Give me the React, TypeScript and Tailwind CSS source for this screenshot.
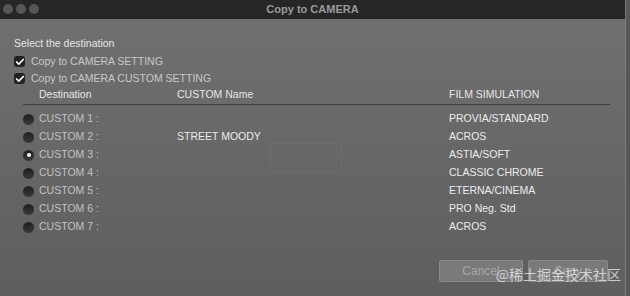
import { Check } from "lucide-react";

const rows = [
  { id: 1, name: "", film: "PROVIA/STANDARD" },
  { id: 2, name: "STREET MOODY", film: "ACROS" },
  { id: 3, name: "", film: "ASTIA/SOFT" },
  { id: 4, name: "", film: "CLASSIC CHROME" },
  { id: 5, name: "", film: "ETERNA/CINEMA" },
  { id: 6, name: "", film: "PRO Neg. Std" },
  { id: 7, name: "", film: "ACROS" },
];

function Checkbox() {
  return (
    <span className="flex h-[11px] w-[11px] items-center justify-center rounded-[3px] bg-[#222]">
      <Check size={10} strokeWidth={4} className="text-white" />
    </span>
  );
}

function Radio({ on }: { on?: boolean }) {
  return (
    <span className="flex h-[11px] w-[11px] items-center justify-center rounded-full bg-gradient-to-b from-[#1f1f1f] to-[#3a3a3a]">
      {on && <span className="h-[4px] w-[4px] rounded-full bg-white" />}
    </span>
  );
}

export default function App() {
  return (
    <div
      className="flex h-[296px] w-[630px] bg-[#585858] text-[10.5px]"
      style={{ fontFamily: '"Liberation Sans", Arial, sans-serif' }}
    >
      <div className="flex w-[626px] flex-col border-r border-[#7c7c7c]">
        {/* title bar */}
        <div className="relative flex h-[19px] items-center bg-[#262626] px-[3px] pb-[1px]">
          <div className="flex gap-[3px]">
            <span className="h-[10px] w-[10px] rounded-full bg-[#565656]" />
            <span className="h-[10px] w-[10px] rounded-full bg-[#565656]" />
            <span className="h-[10px] w-[10px] rounded-full bg-[#565656]" />
          </div>
          <div className="absolute inset-0 flex items-center justify-center text-[11px] font-bold text-[#9a9a9a]">
            Copy to CAMERA
          </div>
        </div>

        {/* body */}
        <div className="relative flex flex-1 flex-col bg-gradient-to-b from-[#707070] to-[#5e5e5e] pl-[14px] pr-[15px] pt-[17px]">
          <div className="leading-[14px] text-[#e4e4e4]">Select the destination</div>
          <div className="mt-[3px] flex items-center gap-[6px] leading-[17px] text-[#c8c8c8]">
            <Checkbox />
            Copy to CAMERA SETTING
          </div>
          <div className="flex items-center gap-[6px] leading-[17px] text-[#c8c8c8]">
            <Checkbox />
            Copy to CAMERA CUSTOM SETTING
          </div>

          <div className="ml-[9px] flex flex-col">
            <div className="grid grid-cols-[138px_272px_1fr] border-b border-[#3f3f3f] pb-[3px] pl-[16px] leading-[14px] text-[#e6e6e6]">
              <span>Destination</span>
              <span>CUSTOM Name</span>
              <span>FILM SIMULATION</span>
            </div>
            <div className="flex flex-col pt-[5px]">
              {rows.map((r) => (
                <div key={r.id} className="grid h-[18px] grid-cols-[16px_138px_272px_1fr] items-center">
                  <Radio on={r.id === 3} />
                  <span className="text-[#c2c2c2]">CUSTOM {r.id} :</span>
                  <span className="text-[#ececec]">{r.name}</span>
                  <span className="text-[#ececec]">{r.film}</span>
                </div>
              ))}
            </div>
          </div>

          {/* faint ghost field */}
          <div className="absolute left-[270px] top-[124px] h-[30px] w-[72px] rounded-[2px] border border-[#747474] opacity-50" />

          <div className="mt-auto mb-[14px] flex justify-end gap-[5px] pr-[2px]">
            <button className="h-[22px] w-[84px] rounded-[2px] border border-[#8a8a8a] bg-[#7a7a7a] text-[12px] text-[#a8a8a8]">
              Cancel
            </button>
            <button className="h-[22px] w-[80px] rounded-[2px] border border-[#8a8a8a] bg-[#7a7a7a] text-[12px] text-[#a8a8a8]">
              Copy
            </button>
          </div>

          <div
            className="absolute bottom-[11px] right-[4px] text-[14px] text-[#e8e8e8] opacity-80"
            style={{ fontFamily: '"Noto Sans CJK SC", sans-serif' }}
          >
            @稀土掘金技术社区
          </div>
        </div>
      </div>
    </div>
  );
}
